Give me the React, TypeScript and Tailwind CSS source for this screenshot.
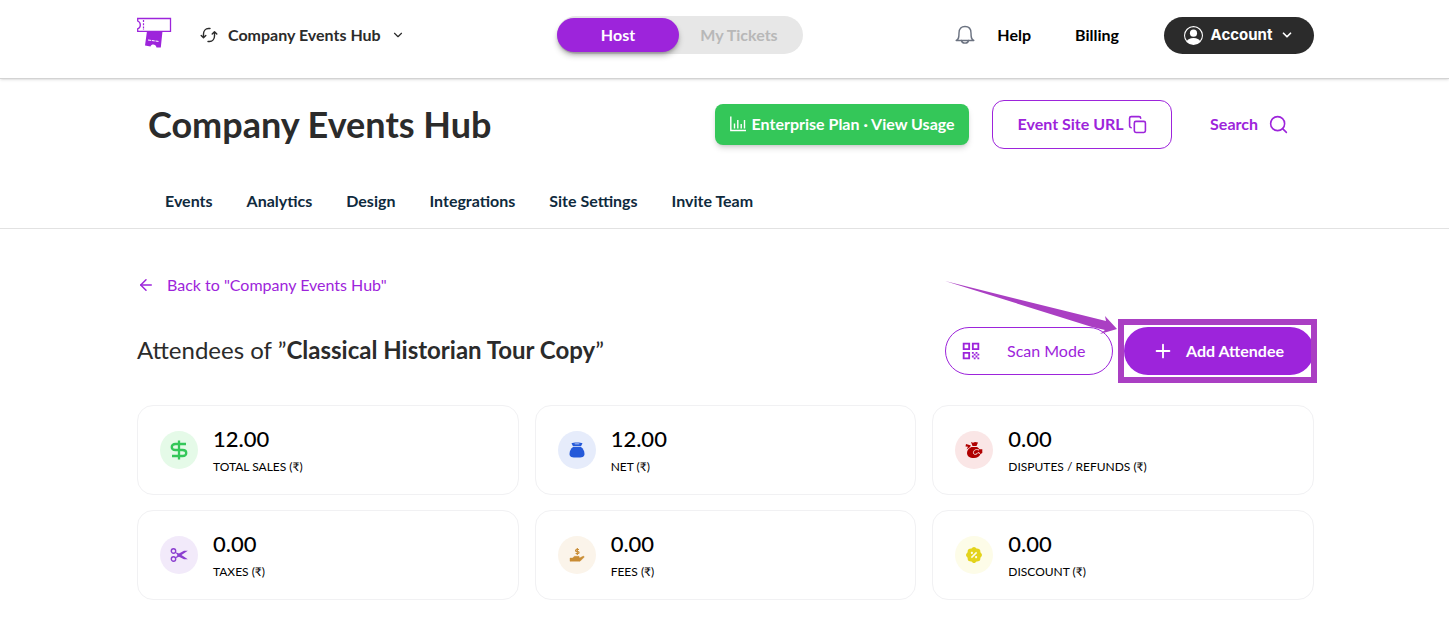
import React from 'react';
import { ArrowLeft, ChevronDown, Copy, Plus, Search } from 'lucide-react';
import { BsPersonCircle } from 'react-icons/bs';
import { MdQrCode } from 'react-icons/md';
import { RiDiscountPercentFill } from 'react-icons/ri';

const NAV_LINKS = ['Events', 'Analytics', 'Design', 'Integrations', 'Site Settings', 'Invite Team'];

interface Stat {
  label: string;
  value: string;
  icon: React.ReactNode;
  tint: string;
}

const STATS: Stat[] = [
  { label: 'TOTAL SALES (₹)', value: '12.00', icon: <DollarIcon />, tint: 'bg-[#e5fae8] text-[#34c759]' },
  { label: 'NET (₹)', value: '12.00', icon: <PouchIcon />, tint: 'bg-[#e6ecfb] text-[#2459d9]' },
  { label: 'DISPUTES / REFUNDS (₹)', value: '0.00', icon: <RefundIcon />, tint: 'bg-[#fae6e6] text-[#b00000]' },
  { label: 'TAXES (₹)', value: '0.00', icon: <ScissorsIcon />, tint: 'bg-[#f2eafa] text-[#8b3fd0]' },
  { label: 'FEES (₹)', value: '0.00', icon: <HandCoinIcon />, tint: 'bg-[#fbf4ea] text-[#c98d35]' },
  { label: 'DISCOUNT (₹)', value: '0.00', icon: <RiDiscountPercentFill size={18} />, tint: 'bg-[#fdfce8] text-[#e3d31c]' },
];

function Logo() {
  return (
    <svg width="36" height="32" viewBox="0 0 36 32" fill="none">
      <path d="M0.7 1.5H33.5V14.3H0.7V11.8C4.2 10.5 4.2 5.3 0.7 4Z" stroke="#9d24db" strokeWidth="1.3" />
      <path d="M6.5 3V13" stroke="#9d24db" strokeWidth="1.2" strokeDasharray="2 1.2" />
      <path d="M10 14H25.5L23.8 30.5H19.5C19 27 14.5 26.5 13.5 29.5L8 28.5Z" fill="#9d24db" />
      <path d="M11 23L22 24.5" stroke="#fff" strokeDasharray="3 0.8" />
    </svg>
  );
}

function SyncIcon() {
  return (
    <svg width="18" height="16" viewBox="0 0 18 16" fill="none" stroke="currentColor" strokeWidth="1.4" strokeLinecap="round" strokeLinejoin="round">
      <path d="M10 1.5H8.5C5.5 1.5 3.5 4 3.5 7V10.5M1.2 8.5L3.5 10.8L5.8 8.5" />
      <path d="M8 14.5H9.5C12.5 14.5 14.5 12 14.5 9V5M12.2 7L14.5 4.7L16.8 7" />
    </svg>
  );
}

function BellIcon() {
  return (
    <svg width="20" height="20" viewBox="0 0 20 20" fill="none" stroke="currentColor" strokeWidth="1.4" strokeLinecap="round" strokeLinejoin="round">
      <path d="M1.2 15.5C3.8 14.5 4 12.5 4 8C4 3.5 6.5 1.5 10 1.5C13.5 1.5 16 3.5 16 8C16 12.5 16.2 14.5 18.8 15.5Z" />
      <path d="M6.5 15.5C7.2 19 12.8 19 13.5 15.5" />
    </svg>
  );
}

function BarsIcon() {
  return (
    <svg width="16" height="16" viewBox="0 0 16 16" fill="none" stroke="currentColor" strokeWidth="1.4">
      <path d="M0.8 0.5V14.5H16M4.5 7.5V12.5M7.8 4V12.5M11.2 8V12.5M14.5 4V12.5" />
    </svg>
  );
}

function DollarIcon() {
  return (
    <svg width="18" height="20" viewBox="0 0 18 20" fill="none" stroke="currentColor" strokeWidth="2.3" strokeLinejoin="round">
      <path d="M16 4H5.5C0.5 4 0.5 10 5.5 10H12.5C17.5 10 17.5 16 12.5 16H2M9 0.5V19.5" />
    </svg>
  );
}

function PouchIcon() {
  return (
    <svg width="16" height="16" viewBox="0 0 16 16" fill="currentColor">
      <path fillRule="evenodd" d="M2.5 1.2C4 0.2 12 0.2 13.5 1.2L12 4.2H4ZM5 1.9C6.5 2.5 9.5 2.5 11 1.9C9.5 1.5 6.5 1.5 5 1.9Z" />
      <path d="M4 5H12C14 6.5 15.5 9 15.5 12C15.5 15 13 15.5 8 15.5C3 15.5 0.5 15 0.5 12C0.5 9 2 6.5 4 5Z" />
    </svg>
  );
}

function RefundIcon() {
  return (
    <svg width="18" height="18" viewBox="0 0 18 18" fill="currentColor">
      <path d="M6 1L8 1.8L10 1L13 1.5L11.5 5H7.5ZM1 3L6 4.5L4.5 6.5L1.5 8.5L3 5.8L0.5 5.5Z" />
      <path d="M6.5 6H12C13 6.6 14 7.5 14.5 8.2L17.3 8.2V12L15.5 13C14.5 15.8 12 17 9 17C4.5 17 2 15 2 12C2 9 4 7 6.5 6Z" />
      <path d="M14 9C10 7.5 8 10 8.5 12.5C9.5 14 12 13.5 13 11.5L15 12.5" fill="none" stroke="#fae6e6" strokeWidth="1" />
    </svg>
  );
}

function ScissorsIcon() {
  return (
    <svg width="18" height="16" viewBox="0 0 18 16" fill="none">
      <circle cx="3.5" cy="4" r="2.2" stroke="currentColor" strokeWidth="1.4" />
      <circle cx="3.5" cy="12" r="2.2" stroke="currentColor" strokeWidth="1.4" />
      <path d="M5 5L9 6.5L14 3.8H17.8L11.5 8L17.8 12.2H14L9 9.8L5 11.5L7.5 8Z" fill="currentColor" />
    </svg>
  );
}

// Open hand with the dollar sign floating over the palm
function HandCoinIcon() {
  return (
    <svg width="16" height="16" viewBox="0 0 16 16" fill="none" stroke="currentColor">
      <path d="M10 2.5H7.6C6.2 2.5 6.2 4.5 7.6 4.5H9C10.4 4.5 10.4 6.5 9 6.5H6.6M8.3 1V8" strokeWidth="1.2" />
      <path d="M1 11H3.5L5.5 9.3H10L10.5 11L14.5 9L15.3 10L11 14.3H1Z" fill="currentColor" strokeWidth="0.4" />
    </svg>
  );
}

function StatCard({ stat }: { stat: Stat }) {
  return (
    <div className="flex h-[90px] items-center gap-[15px] rounded-2xl border border-[#f1f1f3] pl-[22px]">
      <div className={`flex size-[38px] flex-shrink-0 items-center justify-center rounded-full ${stat.tint}`}>
        {stat.icon}
      </div>
      <div className="pt-0.5 text-black">
        <p className="text-[22px] leading-8 font-medium">{stat.value}</p>
        <p className="text-xs leading-6">{stat.label}</p>
      </div>
    </div>
  );
}

export default function App() {
  return (
    <div className="min-h-screen bg-white font-[Lato,sans-serif] text-[#2b2b2b]">
      {/* Top bar */}
      <header className="flex h-[79px] items-center justify-between border-b border-[#d3d3d3] pr-[135px] pb-2 pl-[137px] shadow-sm">
        <div className="flex items-center">
          <a href="#" aria-label="Home" className="pb-1"><Logo /></a>
          <button className="ml-[27px] flex items-center text-base font-bold">
            <SyncIcon />
            <span className="ml-2.5">Company Events Hub</span>
            <ChevronDown size={14} strokeWidth={2} className="ml-2.5" />
          </button>
        </div>

        <div className="flex h-[38px] w-[246px] items-center rounded-full bg-[#e7e7e7] text-base font-bold">
          <button className="h-[34px] w-[122px] rounded-full bg-[#9d24db] text-white shadow-md shadow-black/30">Host</button>
          <button className="h-[34px] flex-1 pr-1 text-[#b8b8b8]">My Tickets</button>
        </div>

        <div className="flex items-center text-base font-bold text-black">
          <button aria-label="Notifications" className="text-[#6b7280]"><BellIcon /></button>
          <a href="#" className="ml-[22px]">Help</a>
          <a href="#" className="ml-11">Billing</a>
          <button className="ml-[45px] flex h-[37px] w-[150px] items-center justify-center rounded-full bg-[#2b2b2b] text-white">
            <BsPersonCircle size={19} />
            <span className="mx-2 font-[Inter,sans-serif] text-[15px]">Account</span>
            <ChevronDown size={14} strokeWidth={3} />
          </button>
        </div>
      </header>

      {/* Hub title + tabs */}
      <section className="border-b border-[#e2e2e2] pr-[135px] pl-[137px]">
        <div className="flex h-[90px] items-center justify-between">
          <h1 className="ml-[11px] text-4xl font-bold">Company Events Hub</h1>
          <div className="flex items-center text-base font-bold">
            <button className="flex h-[41px] w-[254px] items-center justify-center gap-1.5 rounded-lg bg-[#34c759] whitespace-nowrap text-white shadow-md shadow-black/15">
              <BarsIcon />
              Enterprise Plan · View Usage
            </button>
            <button className="ml-[23px] flex h-[49px] w-[180px] items-center justify-center gap-1 rounded-xl border border-[#9d24db] text-[#9d24db]">
              Event Site URL
              <Copy size={19} />
            </button>
            <button className="mr-[25px] ml-[38px] flex items-center gap-2.5 text-[#9d24db]">
              Search
              <Search size={21} strokeWidth={1.8} />
            </button>
          </div>
        </div>
        <nav className="flex h-[59px] items-center gap-[34px] pt-1 pl-7 text-base font-bold text-[#0f2a3d]">
          {NAV_LINKS.map(l => <a key={l} href="#">{l}</a>)}
        </nav>
      </section>

      <main className="pt-11 pr-[135px] pb-5 pl-[137px]">
        <a href="#" className="flex h-6 w-fit items-center gap-3 text-base text-[#9d24db]">
          <ArrowLeft size={18} strokeWidth={2} />
          Back to "Company Events Hub"
        </a>

        <div className="mt-[30px] flex items-center justify-between">
          <h2 className="pb-0.5 text-2xl">Attendees of ”<b>Classical Historian Tour Copy</b>”</h2>
          <div className="flex gap-[11px] text-base">
            <button className="flex h-12 w-[168px] items-center rounded-3xl border border-[#9d24db] pl-3.5 text-[#9d24db]">
              <MdQrCode size={22} />
              <span className="ml-[25px]">Scan Mode</span>
            </button>
            <div className="relative">
              <button className="flex h-12 w-[190px] items-center rounded-3xl bg-[#9d24db] pl-7 font-bold text-white">
                <Plus size={22} strokeWidth={2} />
                <span className="ml-3">Add Attendee</span>
              </button>
              {/* Callout frame and arrow */}
              <div className="pointer-events-none absolute -top-2 -right-[3px] -bottom-2 -left-1.5 border-6 border-[#aa3fc3]" />
              <svg className="pointer-events-none absolute -top-[46px] right-[197px]" width="172" height="55" viewBox="0 0 172 55">
                <path d="M0 0L161 40L160 35L172 48L155 53L160 49L147 46Z" fill="#aa3fc3" />
              </svg>
            </div>
          </div>
        </div>

        <div className="mt-[30px] grid grid-cols-3 gap-x-4 gap-y-[15px]">
          {STATS.map(s => <StatCard key={s.label} stat={s} />)}
        </div>
      </main>
    </div>
  );
}
